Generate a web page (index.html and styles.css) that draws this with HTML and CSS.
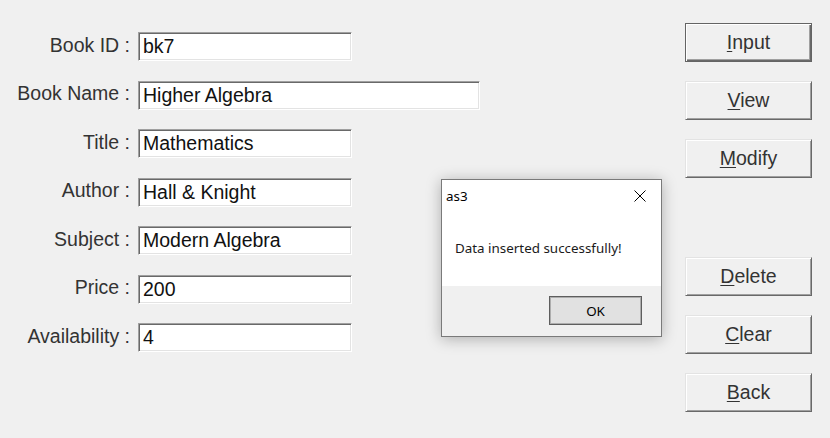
FILE: index.html
```html
<!DOCTYPE html>
<html>
<head>
<meta charset="utf-8">
<link rel="stylesheet" href="styles.css">
</head>
<body>
<div class="window">
  <div class="form">
    <label class="lbl">Book ID :</label><div class="field">bk7</div>
    <label class="lbl">Book Name :</label><div class="field wide">Higher Algebra</div>
    <label class="lbl">Title :</label><div class="field">Mathematics</div>
    <label class="lbl">Author :</label><div class="field">Hall &amp; Knight</div>
    <label class="lbl">Subject :</label><div class="field">Modern Algebra</div>
    <label class="lbl">Price :</label><div class="field">200</div>
    <label class="lbl">Availability :</label><div class="field">4</div>
  </div>
  <div class="buttons">
    <div class="btn default"><span class="in"><u>I</u>nput</span></div>
    <div class="btn"><span class="in"><u>V</u>iew</span></div>
    <div class="btn"><span class="in"><u>M</u>odify</span></div>
    <div class="btn gap"><span class="in"><u>D</u>elete</span></div>
    <div class="btn"><span class="in"><u>C</u>lear</span></div>
    <div class="btn"><span class="in"><u>B</u>ack</span></div>
  </div>
  <div class="dialog">
    <div class="titlebar">
      <span class="dtitle">as3</span>
      <svg class="close" width="12" height="12" viewBox="0 0 12 12"><path d="M0.5 0.5 L11.5 11.5 M11.5 0.5 L0.5 11.5" stroke="#000" stroke-width="1" fill="none"/></svg>
    </div>
    <div class="msg">Data inserted successfully!</div>
    <div class="footer">
      <div class="ok">OK</div>
    </div>
  </div>
</div>
</body>
</html>
```
FILE: styles.css
```css
html, body {
  margin: 0;
  padding: 0;
  background: #f0f0f0;
}
.window {
  position: relative;
  width: 830px;
  height: 438px;
  display: flex;
  font-family: "Liberation Sans", Arial, sans-serif;
  font-size: 19.5px;
  color: #000;
}
.form {
  display: grid;
  grid-template-columns: 130px auto;
  column-gap: 8px;
  row-gap: 19.5px;
  grid-auto-rows: 29px;
  padding-top: 32px;
  align-content: start;
  width: 685px;
}
.lbl {
  text-align: right;
  align-self: center;
  line-height: 22px;
  color: #333;
  margin-top: -4px;
}
.field {
  box-sizing: border-box;
  width: 214px;
  height: 29px;
  background: #fff;
  border: 1px solid;
  border-color: #a0a0a0 #ffffff #ffffff #a0a0a0;
  box-shadow: inset 1px 1px 0 #696969, inset -1px -1px 0 #e3e3e3;
  padding: 1px 0 0 4px;
  line-height: 25px;
  white-space: nowrap;
  color: #111;
}
.field.wide {
  width: 342px;
}
.buttons {
  display: flex;
  flex-direction: column;
  gap: 19px;
  padding-top: 23px;
}
.btn {
  box-sizing: border-box;
  width: 127px;
  height: 39px;
  background: #f0f0f0;
  border: 1px solid;
  border-color: #e3e3e3 #696969 #696969 #e3e3e3;
  box-shadow: inset 1px 1px 0 #ffffff, inset -1px -1px 0 #a0a0a0;
  display: flex;
  align-items: center;
  justify-content: center;
  color: #333;
}
.btn .in {
  line-height: 22px;
  margin-top: -1px;
}
.btn.default {
  border: 1px solid #646464;
  box-shadow: inset 1px 1px 0 #ffffff, inset -1px -1px 0 #696969, inset -2px -2px 0 #a0a0a0;
}
.btn.gap {
  margin-top: 60px;
}
.btn u {
  text-decoration-thickness: 1px;
  text-underline-offset: 2px;
}
.dialog {
  position: absolute;
  left: 441px;
  top: 179px;
  width: 221px;
  height: 158px;
  box-sizing: border-box;
  background: #fff;
  border: 1px solid #7a7a7a;
  box-shadow: 0 2px 14px rgba(0, 0, 0, 0.28);
  font-family: "Noto Sans", "Open Sans", sans-serif;
  font-size: 13.4px;
  display: flex;
  flex-direction: column;
}
.titlebar {
  height: 30px;
  display: flex;
  align-items: center;
  justify-content: space-between;
  padding: 0 15px 0 4px;
}
.dtitle {
  color: #000;
  margin-top: 2px;
}
.close {
  display: block;
  margin-top: 1px;
}
.msg {
  height: 76px;
  padding-left: 13px;
  padding-top: 29px;
  box-sizing: border-box;
  color: #1a1a1a;
}
.footer {
  flex: 1;
  background: #f0f0f0;
  display: flex;
  justify-content: flex-end;
  padding: 10px 19px 0 0;
}
.ok {
  box-sizing: border-box;
  width: 93px;
  height: 29px;
  background: #e1e1e1;
  border: 1px solid #5e5e5e;
  box-shadow: inset 0 0 0 1px #adadad;
  display: flex;
  align-items: center;
  justify-content: center;
  color: #000;
}
```
